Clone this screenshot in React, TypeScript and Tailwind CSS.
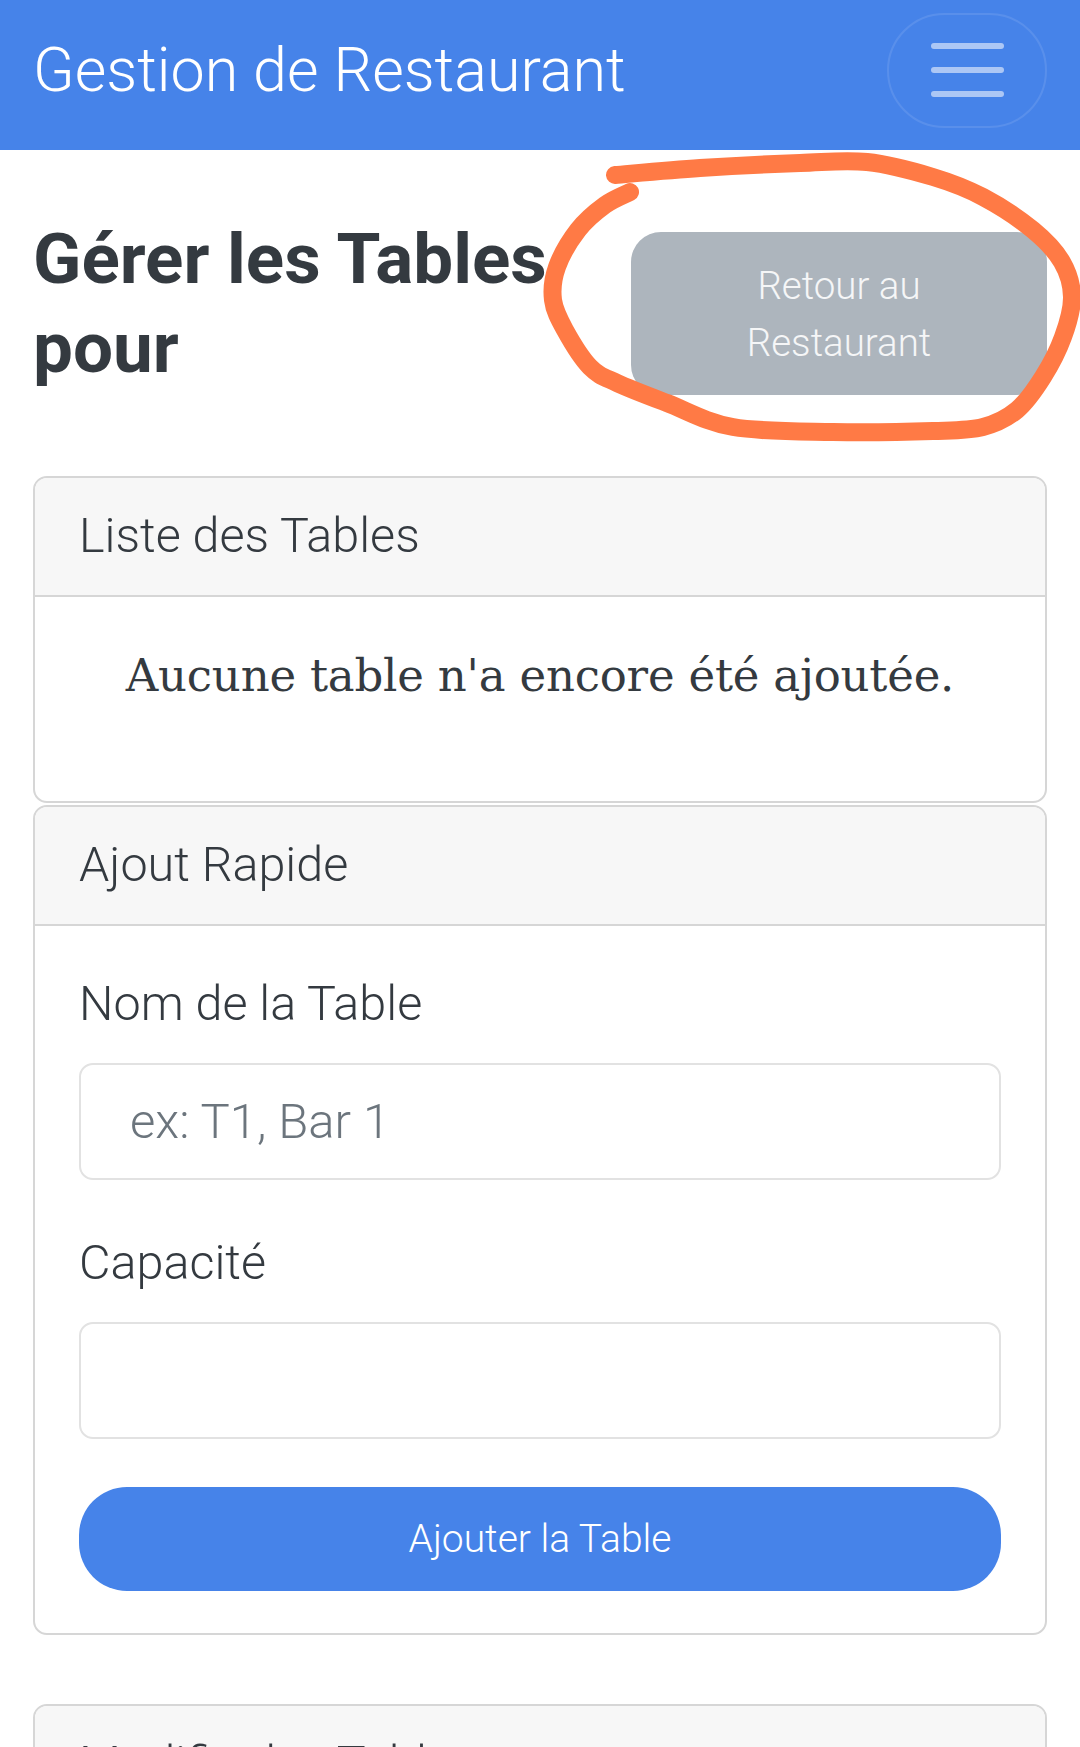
import React from 'react';

// points of the hand-drawn orange loop around the back button (page coords)
const loop: [number, number][] = [
  [615, 175], [700, 168], [800, 163], [867, 162], [933, 177], [983, 197],
  [1033, 230], [1062, 262], [1072, 297], [1063, 337], [1043, 377], [1017, 410],
  [983, 427], [933, 431], [833, 432], [733, 427], [667, 403], [617, 383],
  [590, 367], [565, 330], [553, 300], [557, 267], [578, 230], [605, 205], [630, 192],
];

const smoothPath = (pts: [number, number][]) => {
  let d = `M ${pts[0][0]} ${pts[0][1]}`;
  for (let i = 0; i < pts.length - 1; i++) {
    const p0 = pts[i - 1] || pts[i];
    const p1 = pts[i];
    const p2 = pts[i + 1];
    const p3 = pts[i + 2] || p2;
    const c1x = p1[0] + (p2[0] - p0[0]) / 6;
    const c1y = p1[1] + (p2[1] - p0[1]) / 6;
    const c2x = p2[0] - (p3[0] - p1[0]) / 6;
    const c2y = p2[1] - (p3[1] - p1[1]) / 6;
    d += ` C ${c1x} ${c1y}, ${c2x} ${c2y}, ${p2[0]} ${p2[1]}`;
  }
  return d;
};

const Navbar: React.FC = () => (
  <nav className="h-[150px] bg-[#4683e9] flex items-center justify-between pl-[33px] pr-[33px] pb-[10px]">
    <span className="text-white text-[61px] leading-[90px] font-light">Gestion de Restaurant</span>
    <button
      type="button"
      className="w-[160px] h-[115px] rounded-[58px] border-2 border-white/10 flex flex-col items-center justify-center gap-[18px]"
    >
      <span className="block w-[73px] h-[6px] rounded-full bg-white/55" />
      <span className="block w-[73px] h-[6px] rounded-full bg-white/55" />
      <span className="block w-[73px] h-[6px] rounded-full bg-white/55" />
    </button>
  </nav>
);

const CardHeader: React.FC<{ title: string }> = ({ title }) => (
  <div className="h-[119px] bg-[#f7f7f7] border-b-2 border-[#d6d6d6] flex items-center px-[44px] rounded-t-[12px]">
    <span className="text-[48.5px] leading-[1.5] font-light text-[#343a40]">{title}</span>
  </div>
);

const Field: React.FC<{ label: string; placeholder?: string; first?: boolean }> = ({ label, placeholder, first }) => (
  <div className={first ? '' : 'mt-[48px]'}>
    <label className="block text-[48.5px] leading-[70px] font-light text-[#343a40]">{label}</label>
    <input
      type="text"
      placeholder={placeholder}
      className="mt-[24px] block w-full h-[117px] rounded-[14px] border-2 border-[#e2e2e2] px-[49px] text-[49px] font-light text-[#343a40] placeholder:text-[#6c757d] outline-none"
    />
  </div>
);

export default function App() {
  return (
    <div className="relative min-h-[1747px] bg-white overflow-hidden font-['Roboto',sans-serif]">
      <Navbar />

      <div className="flex items-start justify-between mt-[64px] pl-[33px] pr-[33px]">
        <h2 className="w-[570px] text-[71px] leading-[89px] font-bold text-[#343a40]">Gérer les Tables pour</h2>
        <button
          type="button"
          className="mt-[18px] w-[416px] h-[163px] rounded-[30px] bg-[#adb5bd] text-[#f5f6f7] text-[38.5px] leading-[57px] font-light flex flex-col items-center justify-center"
        >
          <span>Retour au</span>
          <span>Restaurant</span>
        </button>
      </div>

      <div className="px-[33px] mt-[81px]">
        <section className="border-2 border-[#d6d6d6] rounded-[14px]">
          <CardHeader title="Liste des Tables" />
          <div className="h-[204px] pt-[46px] text-center">
            <p className="font-['DejaVu_Serif',serif] text-[45px] leading-[66px] text-[#343a40] tracking-[-0.2px]">
              Aucune table n'a encore été ajoutée.
            </p>
          </div>
        </section>

        <section className="mt-[2px] border-2 border-[#d6d6d6] rounded-[14px]">
          <CardHeader title="Ajout Rapide" />
          <form className="pt-[43px] pb-[42px] px-[44px]" onSubmit={(e) => e.preventDefault()}>
            <Field label="Nom de la Table" placeholder="ex: T1, Bar 1" first />
            <Field label="Capacité" />
            <button
              type="submit"
              className="mt-[48px] w-full h-[104px] rounded-[48px] bg-[#4683e9] text-white text-[39px] font-light"
            >
              Ajouter la Table
            </button>
          </form>
        </section>

        <section className="mt-[69px] border-2 border-[#d6d6d6] rounded-[14px]">
          <CardHeader title="Modifier les Tables" />
          <div className="h-[300px]" />
        </section>
      </div>

      <svg
        className="absolute left-0 top-0 pointer-events-none"
        width="1080"
        height="480"
        viewBox="0 0 1080 480"
      >
        <path
          d={smoothPath(loop)}
          fill="none"
          stroke="#ff7a45"
          strokeWidth="18"
          strokeLinecap="round"
          strokeLinejoin="round"
        />
      </svg>
    </div>
  );
}
